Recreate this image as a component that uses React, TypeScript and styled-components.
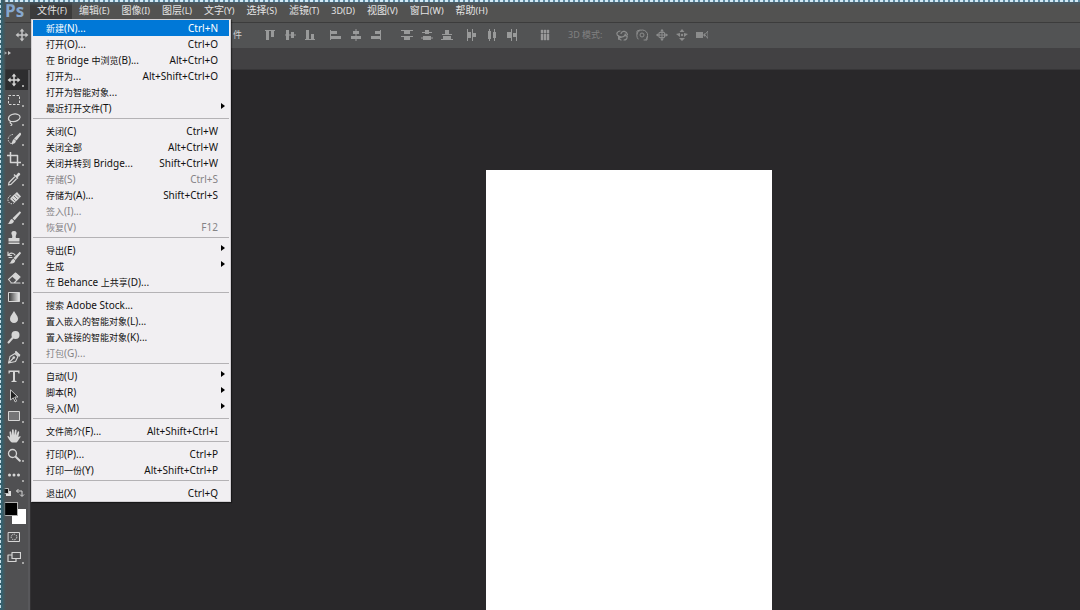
import React from "react";
import styled, { createGlobalStyle, css } from "styled-components";

const GlobalStyle = createGlobalStyle`
  * { box-sizing: border-box; }
  html, body { margin: 0; height: 100%; }
  #root { height: 100%; }
  body {
    background: #29282a;
    font-family: "Noto Sans", "Noto Sans CJK SC", sans-serif;
    font-size: 10px;
    overflow: hidden;
  }
  button { font: inherit; color: inherit; border: 0; padding: 0; margin: 0; background: none; }
`;

const Window = styled.div`
  position: relative;
  display: flex;
  flex-direction: column;
  height: 100%;
  min-height: 100vh;
  overflow: hidden;
`;

const MarqueeTop = styled.div`
  position: absolute;
  inset: 0 0 auto 0;
  height: 6px;
  z-index: 5;
  pointer-events: none;
  background:
    repeating-linear-gradient(90deg, #d3e9f5 0 3px, #5d8ba3 3px 5px) top / 100% 2px no-repeat,
    linear-gradient(#46606f, #4f545600);
`;

const MarqueeLeft = styled.div`
  position: absolute;
  inset: 0 auto 0 0;
  width: 6px;
  z-index: 5;
  pointer-events: none;
  background:
    repeating-linear-gradient(#c4dde6 0 3px, #35616f 3px 5px) left / 1px 100% no-repeat,
    linear-gradient(90deg, #35616f 2px, #44585d 4px, #4f505200);
`;

const MenuBar = styled.nav`
  display: flex;
  align-items: stretch;
  height: 23px;
  padding: 2px 0 0 4px;
  background: #525251;
  border-bottom: 1px solid #3c3c3c;
  color: #e4e4e4;
`;

const Logo = styled.div`
  width: 26px;
  padding-left: 1px;
  font: 700 17px/17px "Open Sans", sans-serif;
  color: #86a8cf;
`;

const MenuSlot = styled.div`
  position: relative;
  display: flex;
`;

const MenuTitle = styled.button<{ $open?: boolean }>`
  height: 17px;
  padding: 0 5px 0 7px;
  line-height: 17px;
  white-space: nowrap;
  background: ${(p) => (p.$open ? "#3b3b3b" : "transparent")};
`;

const Run = styled.span<{ $size: number }>`
  font-size: ${(p) => p.$size}px;
`;

const Dropdown = styled.div`
  position: absolute;
  top: 17px;
  left: 1px;
  z-index: 10;
  width: 200px;
  padding: 0 1px;
  background: #f1eff2;
  border: 1px solid #d2d0d3;
  color: #111;
  box-shadow: 1px 1px 1px #0006;
`;

const MenuItem = styled.button<{ $active?: boolean; $dim?: boolean }>`
  display: flex;
  align-items: center;
  justify-content: space-between;
  width: 100%;
  height: 16px;
  padding: 0 11px 0 13px;
  line-height: 16px;
  white-space: nowrap;
  color: ${(p) => (p.$active ? "#fff" : p.$dim ? "#858386" : "#111")};
  background: ${(p) => (p.$active ? "#0078d7" : "transparent")};
`;

const Arrow = styled.span`
  margin: -4px -7px 0 0;
  border: solid transparent;
  border-width: 3px 0 3px 4px;
  border-left-color: #000;
`;

const Divider = styled.hr`
  height: 1px;
  margin: 2px 0 4px;
  border: 0;
  background: #b4b2b5;
`;

const OptionsBar = styled.div`
  display: flex;
  align-items: center;
  height: 25px;
  padding: 0 0 2px 15px;
  background: #525354;
  color: #c4c4c4;
`;

const OptionGroup = styled.div<{ $left: number; $dim?: boolean }>`
  display: flex;
  gap: 8px;
  margin-left: ${(p) => p.$left}px;
  color: ${(p) => (p.$dim ? "#8b8c8c" : "#999a9a")};
`;

const IconButton = styled.button`
  display: flex;
  width: 12px;
  height: 12px;
`;

const OptionText = styled.span<{ $left: number; $dim?: boolean }>`
  margin-left: ${(p) => p.$left}px;
  width: ${(p) => (p.$dim ? 36 : 10)}px;
  font-size: 9px;
  line-height: 16px;
  white-space: nowrap;
  color: ${(p) => (p.$dim ? "#818181" : "#d0d0d0")};
`;

const TabStrip = styled.div`
  height: 22px;
  padding: 1px 4px;
  background: #424143;
  border-bottom: 1px solid #373638;
  color: #c8c8c8;
  line-height: 0;
`;

const Workspace = styled.div`
  display: flex;
  flex: 1;
  min-height: 0;
`;

const Toolbar = styled.aside`
  display: flex;
  flex-direction: column;
  width: 31px;
  background: linear-gradient(90deg, #505052 28px, #58585b 28px 30px, #333234 30px);
  color: #d6d6d6;
`;

const ToolList = styled.div`
  display: flex;
  flex-direction: column;
  height: 415px;
`;

const Tool = styled.button<{ $active?: boolean }>`
  position: relative;
  display: flex;
  flex: 1;
  align-items: center;
  margin: 0 3px 0 5px;
  padding-left: 2px;
  ${(p) => p.$active && css`background: #2d2d2f;`}
`;

const FlyoutMark = styled.span`
  position: absolute;
  right: 4px;
  bottom: 3px;
  width: 2px;
  height: 2px;
  background: #a5a5a5;
`;

const ColourRow = styled.div`
  display: flex;
  justify-content: space-between;
  padding: 3px 4px 0 3px;
`;

const Swatches = styled.div`
  display: grid;
  grid-template: 7px 7px 8px / 8px 6px 8px;
  margin: 2px 0 3px 4px;
`;

const Swatch = styled.button<{ $front?: boolean }>`
  grid-area: ${(p) => (p.$front ? "1 / 1 / 3 / 3" : "2 / 2 / 4 / 4")};
  z-index: ${(p) => (p.$front ? 1 : 0)};
  background: ${(p) => (p.$front ? "#000" : "#fff")};
  border: 1px solid ${(p) => (p.$front ? "#b0b0b0" : "#fff")};
`;

const ModeButton = styled(Tool)`
  flex: 0 0 20px;
`;

const Stage = styled.main`
  display: flex;
  flex: 1;
  justify-content: center;
  padding: 100px 0 0 147px;
`;

const Page = styled.div`
  flex: 0 0 286px;
  background: #fff;
`;

/* Ideographs and Latin letters are set in slightly different sizes. */
function Label({ text, cjk = 9, latin = 10 }: { text: string; cjk?: number; latin?: number }) {
  const runs = text.match(/[\u4e00-\u9fff]+|[^\u4e00-\u9fff]+/g) ?? [];
  return (
    <span>
      {runs.map((r, i) => (
        <Run key={i} $size={/[\u4e00-\u9fff]/.test(r) ? cjk : latin}>{r}</Run>
      ))}
    </span>
  );
}

type Entry = { label: string; keys?: string; dim?: boolean; sub?: boolean; active?: boolean };

const fileMenu: Entry[][] = [
  [
    { label: "新建(N)...", keys: "Ctrl+N", active: true },
    { label: "打开(O)...", keys: "Ctrl+O" },
    { label: "在 Bridge 中浏览(B)...", keys: "Alt+Ctrl+O" },
    { label: "打开为...", keys: "Alt+Shift+Ctrl+O" },
    { label: "打开为智能对象..." },
    { label: "最近打开文件(T)", sub: true },
  ],
  [
    { label: "关闭(C)", keys: "Ctrl+W" },
    { label: "关闭全部", keys: "Alt+Ctrl+W" },
    { label: "关闭并转到 Bridge...", keys: "Shift+Ctrl+W" },
    { label: "存储(S)", keys: "Ctrl+S", dim: true },
    { label: "存储为(A)...", keys: "Shift+Ctrl+S" },
    { label: "签入(I)...", dim: true },
    { label: "恢复(V)", keys: "F12", dim: true },
  ],
  [
    { label: "导出(E)", sub: true },
    { label: "生成", sub: true },
    { label: "在 Behance 上共享(D)..." },
  ],
  [
    { label: "搜索 Adobe Stock..." },
    { label: "置入嵌入的智能对象(L)..." },
    { label: "置入链接的智能对象(K)..." },
    { label: "打包(G)...", dim: true },
  ],
  [
    { label: "自动(U)", sub: true },
    { label: "脚本(R)", sub: true },
    { label: "导入(M)", sub: true },
  ],
  [{ label: "文件简介(F)...", keys: "Alt+Shift+Ctrl+I" }],
  [
    { label: "打印(P)...", keys: "Ctrl+P" },
    { label: "打印一份(Y)", keys: "Alt+Shift+Ctrl+P" },
  ],
  [{ label: "退出(X)", keys: "Ctrl+Q" }],
];

const menus = ["文件(F)", "编辑(E)", "图像(I)", "图层(L)", "文字(Y)", "选择(S)", "滤镜(T)", "3D(D)", "视图(V)", "窗口(W)", "帮助(H)"];

const Svg = ({ s = 12, children }: { s?: number; children: React.ReactNode }) => (
  <svg width={s} height={s} viewBox={`0 0 ${s} ${s}`} fill="currentColor" stroke="none">{children}</svg>
);

const Stroke = ({ d, w = 1, dash }: { d: string; w?: number; dash?: string }) => (
  <path d={d} fill="none" stroke="currentColor" strokeWidth={w} strokeDasharray={dash} strokeLinecap={dash ? "butt" : "round"} strokeLinejoin="round" />
);

const MoveIcon = () => (
  <Svg s={14}>
    <Stroke d="M7 3v8M3 7h8" w={1.5} />
    <path d="M7 .6 9.4 3.6H4.6zM7 13.4 4.6 10.4h4.8zM.6 7l3-2.4v4.8zM13.4 7l-3 2.4V4.6z" />
  </Svg>
);

const alignGroups: { left: number; icons: [string, React.ReactNode][] }[] = [
  {
    left: 21,
    icons: [
      ["顶对齐", <path d="M1 1h10v1H1zM2 2h3v9H2zM7 2h3v6H7z" />],
      ["垂直居中对齐", <path d="M1 5.5h11v1H1zM2 1h3v10H2zM7 3h3v6H7z" />],
      ["底对齐", <path d="M1 10h10v1H1zM2 1h3v9H2zM7 5h3v5H7z" />],
    ],
  },
  {
    left: 14,
    icons: [
      ["左对齐", <path d="M0 1h1v10H0zM1 2h6v3H1zM1 7h10v3H1z" />],
      ["水平居中对齐", <path d="M5.5 0h1v12h-1zM3 2h6v3H3zM1 7h10v3H1z" />],
      ["右对齐", <path d="M10 1h1v10h-1zM5 2h5v3H5zM1 7h9v3H1z" />],
    ],
  },
  {
    left: 19,
    icons: [
      ["按顶分布", <path d="M0 1h12v1H0zM3 2h6v3H3zM0 7h12v1H0zM3 8h6v3H3z" />],
      ["垂直居中分布", <path d="M1 3h10v1H1zM4 1h4v4H4zM0 8.500h12v1H0zM2 7h8v4H2z" />],
      ["按底分布", <path d="M1 5h10v1H1zM4 1h4v4H4zM0 10h12v1H0zM2 7h8v3H2z" />],
    ],
  },
  {
    left: 13,
    icons: [
      ["按左分布", <path d="M1 0h1v12H1zM2 3h3v6H2zM6 0h1v12H6zM7 4h3v4H7z" />],
      ["水平居中分布", <path d="M3 0h1v12H3zM2 2h3v8H2zM8 0h1v12H8zM7 3h3v6H7z" />],
      ["按右分布", <path d="M5 0h1v12H5zM1 3h4v6H1zM10 0h1v12h-1zM7 4h3v4H7z" />],
    ],
  },
  {
    left: 21,
    icons: [["自动对齐图层", <path d="M2 1h2v3H2zM5 1h2v3H5zM8 1h2v3H8zM2 5h2v6H2zM5 5h2v6H5zM8 5h2v6H8z" stroke="currentColor" strokeWidth=".4" />]],
  },
];

const modeIcons: [string, React.ReactNode][] = [
  ["旋转 3D 对象", <><Stroke d="M4 2C0 3 0 6 3 7.500 5 8.500 8 8 8.500 6.500M5 4.500C6 1 11 2 11.500 6M8 11c2 0 3.500-1.500 3-3.500M3 10l2 1" w={1.2} /><path d="M2 6l4 2-4 3zM9 4l3 4-4-1z" /></>],
  ["滚动 3D 对象", <><circle cx="6" cy="6" r="2" fill="none" stroke="currentColor" /><Stroke d="M2 10A5.500 5.500 0 1 1 10 10.500M4 1 1 2v3M8 11h3V8" /></>],
  ["拖动 3D 对象", <><Stroke d="M6 1v10M1 6h10M3.500 3.500h5v5h-5z" /><path d="M6 0l2 2.500H4zM6 12 4 9.500h4zM0 6l2.500-2v4zM12 6 9.500 8V4z" /></>],
  ["滑动 3D 对象", <><circle cx="6" cy="6" r="1.200" /><path d="M6 0l2.500 3h-5zM6 12 3 9h6zM0 5l4-1v4zM12 5 8 4v4z" /></>],
  ["缩放 3D 对象", <><path d="M0 3h7v6H0zM7 6l2-2v4z" /><Stroke d="M12 2.500v7L9 6z" /></>],
];

const tools: [string, React.ReactNode][] = [
  ["移动工具", <MoveIcon />],
  ["矩形选框工具", <Svg s={14}><Stroke d="M1.500 2.500h11v9h-11z" dash="2.500 1.500" /></Svg>],
  ["套索工具", <Svg s={14}><Stroke d="M4 9.500C.5 8.500.5 4 5 2.500s8.500.5 8 3S9 10 5 9.500c-2-.2-2.500 1.500-1 2 1.200.3 1 1.500 0 2" w={1.2} /></Svg>],
  ["快速选择工具", <Svg s={14}><Stroke d="M6 2.500A4.500 4.500 0 1 0 6 12" dash="1.500 1.200" /><path d="M13 .5 14.500 2 9.500 8.500 7 6.500zM7 7l2 1.800C8.500 11.500 6.500 12.500 3.500 12 6 10.500 4.800 8 7 7z" /></Svg>],
  ["裁剪工具", <Svg s={14}><Stroke d="M3.500 0v10.500H14M0 3.500h10.500V14" w={1.5} /></Svg>],
  ["吸管工具", <Svg s={14}><path d="M9 3.500 11 1c1-1 3 .8 2 2L10.700 5.200l.8.8-1 1-4-4 1-1z" /><Stroke d="M7.500 5 2 10.500 1.500 13 4 12.300 9.300 7" w={1.2} /></Svg>],
  ["污点修复画笔工具", <Svg s={14}><path d="M4.500 6 10 1l4 4.500L7.500 12 3 8z" /><path d="M7 5l3 3M9 3.500l3 3M5.500 7.500l3 3" stroke="#505052" strokeWidth=".7" /><Stroke d="M3.500 4.500C.5 6 0 10 2.500 12c2 1.500 4 .5 4.500 0" dash="1.500 1" /></Svg>],
  ["画笔工具", <Svg s={14}><path d="M12.800.3l1.300 1.300L7.700 9.200 5.500 7.300zM5 8l2 2c-.5 2.500-3.500 3.500-6.500 2.500C3 12 2.500 8.500 5 8z" /></Svg>],
  ["仿制图章工具", <Svg s={14}><path d="M7 0c2.500 0 3.200 2 2.200 3.700C8.500 5 8.700 6.500 9 7h3.500v3.500h-11V7H5c.3-.5.5-2-.2-3.300C3.800 2 4.500 0 7 0zM1.500 11.500h11V13h-11z" /></Svg>],
  ["历史记录画笔工具", <Svg s={14}><path d="M12.800.8l1.300 1.300L8.500 9 6.500 7zM6.500 7.700l1.800 1.700C8 12 5 13 2 12.500c2.500-1 2-4 4.500-4.800z" /><Stroke d="M2 3.500C4 1.500 7 2 8 4M1 1v3.500h3.500M2 6.500h3" w={1.2} /></Svg>],
  ["橡皮擦工具", <Svg s={14}><path d="M8.500 2 13 6 9.500 9.500 5 5.500z" /><Stroke d="M8.500 2 1.500 8.500 4.500 12H7l6-6zM4 12h9" w={1.1} /></Svg>],
  ["渐变工具", <Svg s={14}><defs><linearGradient id="ramp"><stop stopColor="#333" /><stop offset="1" stopColor="#eee" /></linearGradient></defs><path d="M1.500 2.500h11v9h-11z" fill="url(#ramp)" stroke="currentColor" /></Svg>],
  ["模糊工具", <Svg s={14}><path d="M7 1c1.500 3 4 5 4 7.700A4 4 0 0 1 7 13a4 4 0 0 1-4-4.300C3 6 5.500 4 7 1z" /></Svg>],
  ["减淡工具", <Svg s={14}><circle cx="8.500" cy="5" r="4" /><Stroke d="M5.500 8 1.500 12.500" w={2} /></Svg>],
  ["钢笔工具", <Svg s={14}><Stroke d="M1.500 13 3 6.500 8 3.500 11 6.500 8.500 11.500zM1.500 13 6.500 8M8.500 2 12.500 6" w={1.1} /><circle cx="6.800" cy="7.500" r="1.300" /><path d="M9 .8 13.500 5l-1 1L8 2z" /></Svg>],
  ["横排文字工具", <Svg s={14}><path d="M1.500 1.500h11v3h-1C11.300 3.300 11 3 10 3H8v8c0 .7.500 1 1.500 1v1h-5v-1C5.500 12 6 11.700 6 11V3H4c-1 0-1.300.3-1.500 1.500h-1z" /></Svg>],
  ["路径选择工具", <Svg s={14}><path d="M3.500.8 11 8H7.800l1.800 4.200-1.500.7L6.300 8.800 3.500 11z" fill="#222" stroke="#c8c8c8" /></Svg>],
  ["矩形工具", <Svg s={14}><path d="M1.500 2.500h11v9h-11z" fill="#747476" stroke="currentColor" /></Svg>],
  ["抓手工具", <Svg s={14}><path d="M4 13C2.500 11.500 1.500 9.500.3 7.500.5 6.500 1.800 6.800 3 8.500L2.500 3c.3-1 1.300-1 1.600 0l.8 3.500L5 1c.3-1 1.500-1 1.700 0l.3 5.300L8 1.200c.4-1 1.500-.7 1.600.3L9.200 6.500l1.500-3.700c.5-.8 1.500-.4 1.500.5L11.300 8c1.200-1 2.400-1.200 2.500-.3C12 9.500 11.500 12 9.500 13.500H5z" /></Svg>],
  ["缩放工具", <Svg s={14}><circle cx="5.500" cy="5.500" r="4" fill="none" stroke="currentColor" strokeWidth="1.300" /><Stroke d="M8.700 8.700 12.800 12.800" w={2} /></Svg>],
  ["编辑工具栏", <Svg s={14}><circle cx="2.500" cy="7" r="1.500" /><circle cx="7" cy="7" r="1.500" /><circle cx="11.500" cy="7" r="1.500" /></Svg>],
];

export default function App() {
  return (
    <>
      <GlobalStyle />
      <Window>
        <MarqueeTop />
        <MarqueeLeft />
        <MenuBar>
          <Logo>Ps</Logo>
          {menus.map((m, i) => (
            <MenuSlot key={m}>
              <MenuTitle $open={i === 0}><Label text={m} cjk={10} latin={9} /></MenuTitle>
              {i === 0 && (
                <Dropdown role="menu">
                  {fileMenu.map((group, g) => (
                    <React.Fragment key={g}>
                      {g > 0 && <Divider />}
                      {group.map((e) => (
                        <MenuItem key={e.label} role="menuitem" $active={e.active} $dim={e.dim}>
                          <Label text={e.label} />
                          {e.keys && <Run $size={10}>{e.keys}</Run>}
                          {e.sub && <Arrow />}
                        </MenuItem>
                      ))}
                    </React.Fragment>
                  ))}
                </Dropdown>
              )}
            </MenuSlot>
          ))}
        </MenuBar>
        <OptionsBar>
          <MoveIcon />
          <OptionText $left={204}>件</OptionText>
          {alignGroups.map((g, i) => (
            <OptionGroup key={i} $left={g.left}>
              {g.icons.map(([name, art]) => (
                <IconButton key={name} aria-label={name}><Svg>{art}</Svg></IconButton>
              ))}
            </OptionGroup>
          ))}
          <OptionText $left={17} $dim>3D 模式:</OptionText>
          <OptionGroup $left={12} $dim>
            {modeIcons.map(([name, art]) => (
              <IconButton key={name} aria-label={name}><Svg>{art}</Svg></IconButton>
            ))}
          </OptionGroup>
        </OptionsBar>
        <TabStrip>
          <svg width="7" height="8" viewBox="0 0 7 8" fill="currentColor"><path d="M0 2l3 2-3 2zM4 2l3 2-3 2z" /></svg>
        </TabStrip>
        <Workspace>
          <Toolbar>
            <ToolList>
              {tools.map(([name, art], i) => (
                <Tool key={name} aria-label={name} $active={i === 0}>
                  {art}
                  <FlyoutMark />
                </Tool>
              ))}
            </ToolList>
            <ColourRow>
              <IconButton aria-label="默认前景色和背景色">
                <svg width="9" height="9" viewBox="0 0 9 9"><path d="M3 3h5v5H3z" fill="#ddd" /><path d="M.5.5h5v5h-5z" fill="#111" stroke="#bbb" /></svg>
              </IconButton>
              <IconButton aria-label="切换前景色和背景色">
                <svg width="10" height="10" viewBox="0 0 10 10" fill="none" stroke="#d6d6d6"><path d="M3.500 1 1.500 3l2 2M1.500 3h5.500v5M5 6.500l2 2 2-2" /></svg>
              </IconButton>
            </ColourRow>
            <Swatches>
              <Swatch $front aria-label="前景色" />
              <Swatch aria-label="背景色" />
            </Swatches>
            <ModeButton aria-label="以快速蒙版模式编辑">
              <Svg s={14}><Stroke d="M1.500 2.500h11v9h-11z" /><circle cx="7" cy="7" r="2.800" fill="none" stroke="currentColor" strokeDasharray="1.500 1" /></Svg>
            </ModeButton>
            <ModeButton aria-label="更改屏幕模式">
              <Svg s={14}><Stroke d="M4.500 5H1v6.500h8V9" w={1.2} /><Stroke d="M5 2.500h8.500v6H5z" w={1.2} /></Svg>
              <FlyoutMark />
            </ModeButton>
          </Toolbar>
          <Stage>
            <Page />
          </Stage>
        </Workspace>
      </Window>
    </>
  );
}
